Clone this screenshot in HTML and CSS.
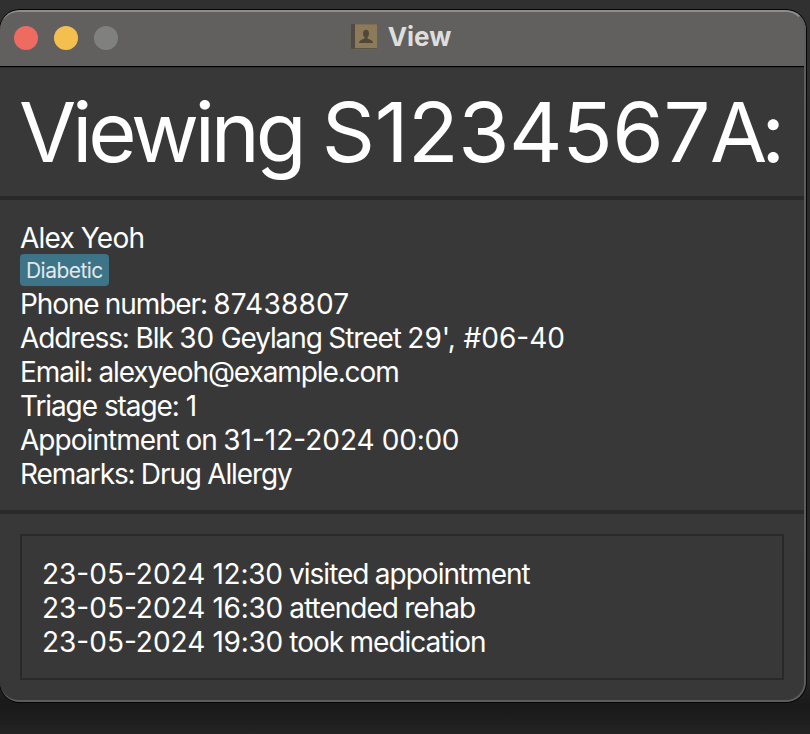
FILE: index.html
```html
<!DOCTYPE html>
<html lang="en">
<head>
<meta charset="utf-8">
<title>View</title>
<link rel="stylesheet" href="styles.css">
</head>
<body>
<main class="window">
  <header class="titlebar">
    <div class="controls"><span class="dot close"></span><span class="dot minimize"></span><span class="dot zoom"></span></div>
    <svg class="book" width="28" height="28" viewBox="0 0 28 28">
      <rect x="0.500" y="1" width="27" height="26" rx="2" fill="#6d6250"/>
      <rect x="1" y="1" width="4" height="25" rx="1" fill="#504b46"/>
      <rect x="5" y="1.500" width="22" height="23.500" fill="#8d7a59"/>
      <path d="M5 25.500h22" stroke="#5c5344"/>
      <ellipse cx="16" cy="10.500" rx="3" ry="3.800" fill="#504838"/>
      <path d="M14.500 12h3v3.500l3.500 1.500q2 .8 2 3H9q0-2.200 2-3l3.500-1.500z" fill="#504838"/>
    </svg>
    <span class="title">View</span>
  </header>
  <section class="heading"><h1>Viewing <span class="id">S1234567<span class="suffix">A</span>:</span></h1></section>
  <section class="details">
    <p>Alex Yeoh</p>
    <div class="tags"><span class="tag">Diabetic</span></div>
    <p>Phone number: <span class="num phone">87438807</span></p>
    <p class="address">Address: Blk <span class="num">30</span> Geylang Street <span class="num">29', #06-40</span></p>
    <p>Email: alexyeoh@example.com</p>
    <p class="triage">Triage stage: <span class="num">1</span></p>
    <p class="appointment">Appointment on <span class="num date">31-12-2024 <span class="time">00:00</span></span></p>
    <p>Remarks: Drug Allergy</p>
  </section>
  <section class="history"><div class="log">
    <p><span class="num date">23-05-2024 <span class="time">12:30</span></span> visited appointment</p>
    <p><span class="num date">23-05-2024 <span class="time">16:30</span></span> attended rehab</p>
    <p><span class="num date">23-05-2024 <span class="time">19:30</span></span> took medication</p>
  </div></section>
</main>
</body>
</html>
```
FILE: styles.css
```css
* { box-sizing: border-box; }
html { background: #202020; }
body { margin: 0; width: 810px; height: 734px; overflow: hidden; padding-top: 10px; font-family: Inter, sans-serif; color: #fff; background: linear-gradient(#303030 0, #303030 10px, #2a2a2a 150px, #252525 680px, #191919 705px, #232323 734px); }
.window { position: relative; width: 806px; height: 692px; border-radius: 20px; background: #383838; overflow: hidden; box-shadow: 0 0 0 1px #050505; }
.window::after { content: ""; position: absolute; inset: 0 0 0 -1px; border: 2px solid #5c5c5c; border-left-width: 1px; border-top-color: #8e8d8b; border-radius: 20px; }
.titlebar { height: 58px; padding-bottom: 4px; border-bottom: 1px solid #2c2c2c; background: #61605e; box-shadow: inset 0 -1px #000; display: flex; align-items: center; justify-content: center; position: relative; }
.controls { position: absolute; left: 14px; top: 16px; display: flex; gap: 16px; }
.dot { width: 24px; height: 24px; border-radius: 50%; }
.close { background: #ed6b60; }
.minimize { background: #f5bf4f; }
.zoom { background: #80807e; }
.book { margin-left: -5px; margin-right: 10px; }
.title { font-size: 26px; font-weight: 700; color: #dededd; }
.heading { height: 132px; border-bottom: 4px solid #292929; padding: 8px 19px; }
h1 { margin: 0; font-size: 83px; line-height: 112px; font-weight: 400; white-space: nowrap; letter-spacing: -4.100px; }
.id { letter-spacing: -0.400px; }
.suffix { letter-spacing: -6px; }
.details { height: 314px; padding: 21px 20px 0; border-bottom: 4px solid #292929; }
p { margin: 0; font-size: 28px; line-height: 34px; letter-spacing: -1.100px; word-spacing: -0.500px; white-space: nowrap; }
.details p:first-child { height: 33px; line-height: 35px; letter-spacing: -0.750px; }
.num { letter-spacing: 0; }
.phone { letter-spacing: 0.200px; }
.date { letter-spacing: 0; word-spacing: -0.800px; }
.time { letter-spacing: -0.250px; }
.address { word-spacing: -0.200px; }
.triage { word-spacing: 0.300px; }
.appointment { letter-spacing: -0.950px; }
.tags { height: 33px; display: flex; }
.tag { height: 32px; padding: 0 6px; border-radius: 4px; background: #3e7488; color: #e3e8ea; font-size: 21px; line-height: 34px; letter-spacing: -0.550px; }
.history { padding: 20px; }
.log { width: 764px; height: 146px; border: 2px solid #292929; padding: 21px 20px; }
.log p { letter-spacing: -1px; }
```
